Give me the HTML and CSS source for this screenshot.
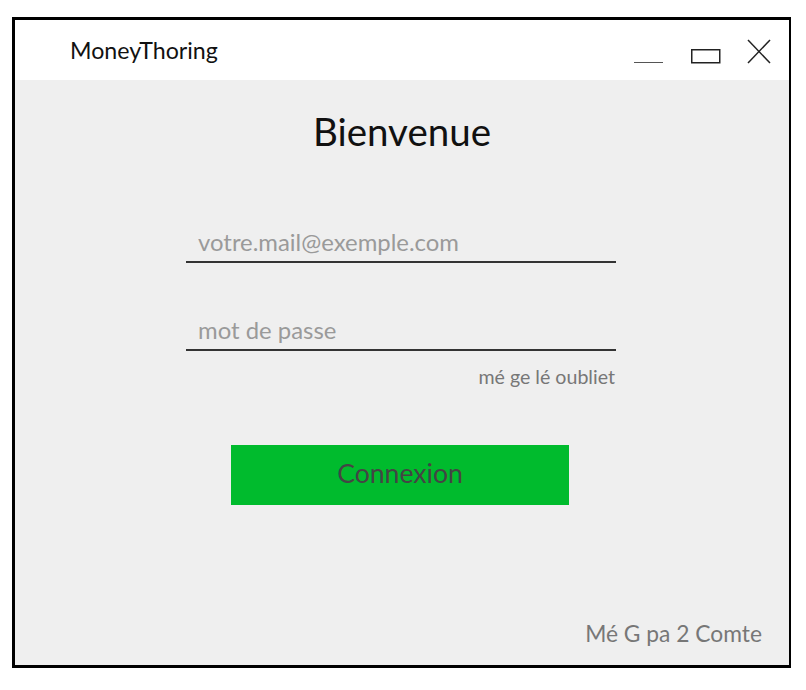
FILE: index.html
```html
<!DOCTYPE html>
<html lang="fr">
<head>
<meta charset="utf-8">
<title>MoneyThoring</title>
<link rel="stylesheet" href="styles.css">
</head>
<body>
<div class="window">
  <header class="titlebar">
    <span class="app-name">MoneyThoring</span>
    <svg class="controls" width="142" height="28" viewBox="0 0 142 28">
      <line x1="3" y1="24.5" x2="32" y2="24.5" stroke="#555" stroke-width="1"/>
      <rect x="60.75" y="11.75" width="28" height="13" fill="none" stroke="#222" stroke-width="1.5"/>
      <line x1="117" y1="2" x2="139" y2="25" stroke="#222" stroke-width="1.5"/>
      <line x1="139" y1="2" x2="117" y2="25" stroke="#222" stroke-width="1.5"/>
    </svg>
  </header>
  <main class="content">
    <h1 class="heading">Bienvenue</h1>
    <form class="form">
      <input class="field field-mail" type="text" placeholder="votre.mail@exemple.com">
      <input class="field field-pass" type="password" placeholder="mot de passe">
      <a class="forgot">mé ge lé oubliet</a>
      <button class="btn" type="button">Connexion</button>
    </form>
    <a class="signup">Mé G pa 2 Comte</a>
  </main>
</div>
</body>
</html>
```
FILE: styles.css
```css
* { box-sizing: border-box; }
html, body { margin: 0; padding: 0; background: #fff; }
body { font-family: Lato, "Open Sans", sans-serif; }

.window {
  margin: 17px 0 0 12px;
  width: 779px;
  height: 651px;
  border: 3px solid #000;
  border-right-width: 2px;
  display: flex;
  flex-direction: column;
}

.titlebar {
  height: 60px;
  background: #fff;
  display: flex;
  align-items: flex-start;
}
.app-name {
  font-size: 23.2px;
  line-height: 1;
  color: #111;
  margin: 19px 0 0 55px;
}
.controls {
  margin: 18px 16px 0 auto;
  display: block;
}

.content {
  flex: 1;
  background: #efefef;
  display: flex;
  flex-direction: column;
  align-items: center;
}
.heading {
  margin: 32px 0 0 0;
  font-weight: 400;
  font-size: 38.5px;
  line-height: 1;
  color: #111;
}
.form {
  width: 430px;
  margin-top: 77px;
  margin-right: 2px;
  display: flex;
  flex-direction: column;
}
.field {
  display: block;
  width: 100%;
  height: 35px;
  padding: 0 0 6px 12px;
  border: none;
  border-bottom: 2px solid #333;
  background: transparent;
  font-family: inherit;
  font-size: 23.9px;
  color: #333;
  outline: none;
}
.field::placeholder { color: #9a9a9a; }
.field-pass { margin-top: 53px; }
.forgot {
  align-self: flex-end;
  margin-top: 16px;
  margin-right: 1px;
  font-size: 19.6px;
  line-height: 1;
  color: #777;
}
.btn {
  align-self: flex-start;
  width: 338px;
  height: 60px;
  margin-top: 59px;
  margin-left: 45px;
  padding: 0 0 4px 0;
  border: none;
  background: #00bb2d;
  font-family: inherit;
  font-size: 26.6px;
  color: #444;
}
.signup {
  align-self: flex-end;
  margin: auto 27px 20px 0;
  font-size: 22.8px;
  line-height: 1;
  color: #777;
}
```
